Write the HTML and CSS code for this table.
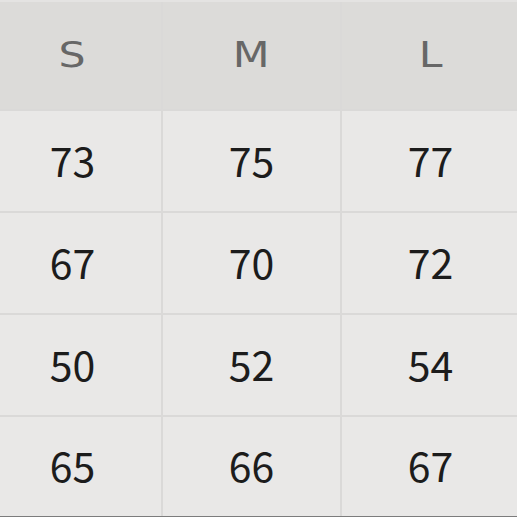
FILE: index.html
```html
<!DOCTYPE html>
<html lang="en">
<head>
<meta charset="utf-8">
<title>Size chart</title>
<link rel="stylesheet" href="styles.css">
</head>
<body>
<div class="chart">
  <div class="cell head"><span class="label">S</span></div>
  <div class="cell head"><span class="label">M</span></div>
  <div class="cell head"><span class="label">L</span></div>
  <div class="cell">73</div>
  <div class="cell">75</div>
  <div class="cell">77</div>
  <div class="cell">67</div>
  <div class="cell">70</div>
  <div class="cell">72</div>
  <div class="cell">50</div>
  <div class="cell">52</div>
  <div class="cell">54</div>
  <div class="cell">65</div>
  <div class="cell">66</div>
  <div class="cell">67</div>
</div>
</body>
</html>
```
FILE: styles.css
```css
html, body {
  margin: 0;
  padding: 0;
  background: #e8e7e6;
  overflow: hidden;
}
.chart {
  width: 535px;
  height: 517px;
  box-sizing: border-box;
  margin-left: -16px;
  display: grid;
  grid-template-columns: 177px 177px 177px;
  grid-template-rows: 107px 100px 100px 100px 99px;
  gap: 2px;
  background: #dad9d8;
  border-top: 2px solid #e4e3e2;
  border-bottom: 1px solid #7c7c7c;
}
.cell {
  background: #e9e8e7;
  display: flex;
  align-items: center;
  justify-content: center;
  font-family: "Noto Sans CJK SC", "Noto Sans", sans-serif;
  font-size: 41px;
  color: #1c1c1c;
  line-height: 1;
  padding-bottom: 4px;
}
.head {
  background: #dcdbd9;
  font-family: "DejaVu Sans", sans-serif;
  font-size: 35px;
  color: #676767;
  padding-bottom: 0;
}
.label {
  display: inline-block;
  transform: scaleX(1.22);
}
```
